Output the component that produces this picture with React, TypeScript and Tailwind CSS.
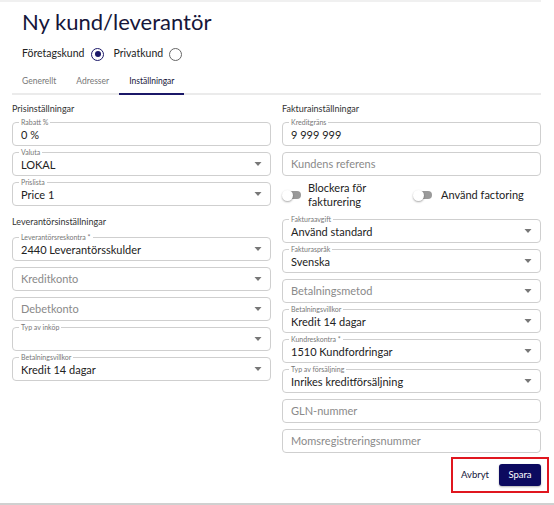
import React from "react";

const font = { fontFamily: "Lato, 'Noto Sans', sans-serif" };

function Chevron() {
  return (
    <svg width="8" height="5" viewBox="0 0 8 5" className="absolute right-[8px] top-1/2 -translate-y-1/2">
      <path d="M0.5 0.5 L7.5 0.5 L4 4.5 Z" fill="#777" />
    </svg>
  );
}

function Field({
  label,
  value,
  placeholder,
  select,
}: {
  label?: string;
  value?: string;
  placeholder?: string;
  select?: boolean;
}) {
  return (
    <div className="relative h-[24px] rounded-[4px] border border-[#cfcfcf] flex items-center px-[8px]">
      {label && (
        <span className="absolute left-[6px] top-[-5px] bg-white px-[2px] text-[7px] leading-[8px] text-[#777]">
          {label}
        </span>
      )}
      {value !== undefined && (
        <span className={`text-[11px] text-[#222] ${label ? "mt-[3px]" : ""}`}>{value}</span>
      )}
      {placeholder && <span className="text-[11px] text-[#8a8a8a]">{placeholder}</span>}
      {select && <Chevron />}
    </div>
  );
}

function Toggle() {
  return (
    <div className="relative w-[20px] h-[12px] flex items-center">
      <div className="absolute left-[4px] w-[15px] h-[8px] rounded-full bg-[#9a9a9a]" />
      <div className="absolute left-0 w-[11px] h-[11px] rounded-full bg-white shadow-[0_1px_2px_rgba(0,0,0,0.35)]" />
    </div>
  );
}

function Radio({ checked }: { checked?: boolean }) {
  return (
    <div
      className={`w-[13px] h-[13px] rounded-full border-[1.5px] flex items-center justify-center ${
        checked ? "border-[#1b1868]" : "border-[#666]"
      }`}
    >
      {checked && <div className="w-[6px] h-[6px] rounded-full bg-[#1b1868]" />}
    </div>
  );
}

export default function App() {
  return (
    <div className="w-[554px] h-[505px] bg-white relative overflow-hidden" style={font}>
      <div className="h-[2px] w-[541px] bg-[#f0f0f0]" />
      <div className="pl-[12px] w-[541px]">
        <div className="pl-[10px] pt-[6px] text-[22px] leading-[28px] text-[#16163a]">Ny kund/leverantör</div>
        <div className="pl-[10px] mt-[11px] flex items-center text-[10.5px] text-[#222] h-[14px]">
          <span>Företagskund</span>
          <div className="ml-[7px]"><Radio checked /></div>
          <span className="ml-[9px]">Privatkund</span>
          <div className="ml-[6px]"><Radio /></div>
        </div>
        <div className="mt-[9px] flex border-b-2 border-[#ebebeb] h-[25px] text-[8.5px]">
          <div className="px-[10px] flex items-center text-[#777]">Generellt</div>
          <div className="px-[10px] flex items-center text-[#777]">Adresser</div>
          <div className="px-[10px] flex items-center text-[#16163a] border-b-2 border-[#1b1868] mb-[-2px]">Inställningar</div>
        </div>
        <div className="mt-[7px] grid grid-cols-2 gap-x-[11px]">
          <div className="flex flex-col">
            <div className="text-[9px] text-[#333] h-[14px] leading-[14px]">Prisinställningar</div>
            <div className="mt-[6px] flex flex-col gap-[6px]">
              <Field label="Rabatt %" value="0 %" />
              <Field label="Valuta" value="LOKAL" select />
              <Field label="Prislista" value="Price 1" select />
            </div>
            <div className="mt-[9px] text-[9px] text-[#333] h-[14px] leading-[14px]">Leverantörsinställningar</div>
            <div className="mt-[8px] flex flex-col gap-[6px]">
              <Field label="Leverantörsreskontra *" value="2440 Leverantörsskulder" select />
              <Field placeholder="Kreditkonto" select />
              <Field placeholder="Debetkonto" select />
              <Field label="Typ av inköp" value="" select />
              <Field label="Betalningsvillkor" value="Kredit 14 dagar" select />
            </div>
          </div>
          <div className="flex flex-col">
            <div className="text-[9px] text-[#333] h-[14px] leading-[14px]">Fakturainställningar</div>
            <div className="mt-[6px] flex flex-col gap-[6px]">
              <Field label="Kreditgräns" value="9 999 999" />
              <Field placeholder="Kundens referens" />
            </div>
            <div className="flex items-center h-[38px] text-[11px] text-[#222]">
              <div className="flex items-center w-[131px]">
                <Toggle />
                <div className="ml-[6px] leading-[14px]">Blockera för<br />fakturering</div>
              </div>
              <div className="flex items-center">
                <Toggle />
                <div className="ml-[8px]">Använd factoring</div>
              </div>
            </div>
            <div className="mt-[5px] flex flex-col gap-[6px]">
              <Field label="Fakturaavgift" value="Använd standard" select />
              <Field label="Fakturaspråk" value="Svenska" select />
              <Field placeholder="Betalningsmetod" select />
              <Field label="Betalningsvillkor" value="Kredit 14 dagar" select />
              <Field label="Kundreskontra *" value="1510 Kundfordringar" select />
              <Field label="Typ av försäljning" value="Inrikes kreditförsäljning" select />
              <Field placeholder="GLN-nummer" />
              <Field placeholder="Momsregistreringsnummer" />
            </div>
          </div>
        </div>
      </div>
      <div className="flex justify-end pr-[5px] mt-[4px]">
        <div className="border-2 border-[#e0161f] w-[98px] h-[36px] flex items-center justify-end pr-[6px]">
          <span className="text-[9.5px] text-[#16163a] mr-[10px]">Avbryt</span>
          <div className="w-[42px] h-[22px] rounded-[3px] bg-[#0c0a5f] text-white text-[9.5px] flex items-center justify-center shadow-[0_1px_2px_rgba(0,0,0,0.3)]">
            Spara
          </div>
        </div>
      </div>
      <div className="absolute bottom-0 left-0 w-full h-[2px] bg-[#d0d0d0]" />
    </div>
  );
}
